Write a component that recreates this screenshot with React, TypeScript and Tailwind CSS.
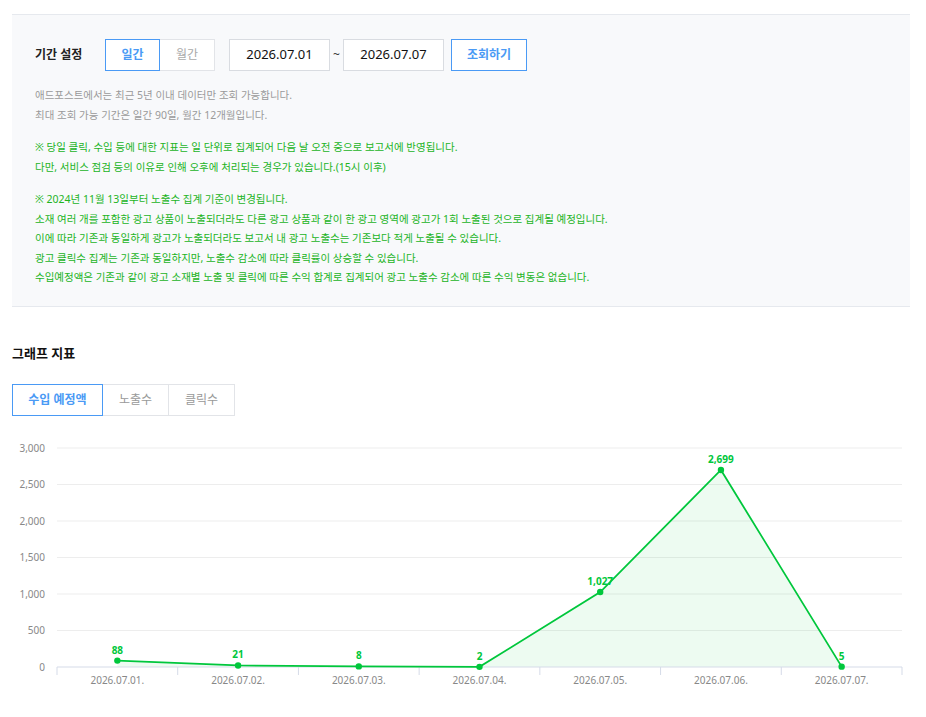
import React from "react";

const data = [
  { d: "2026.07.01.", v: 88 },
  { d: "2026.07.02.", v: 21 },
  { d: "2026.07.03.", v: 8 },
  { d: "2026.07.04.", v: 2 },
  { d: "2026.07.05.", v: 1027 },
  { d: "2026.07.06.", v: 2699 },
  { d: "2026.07.07.", v: 5 },
];

const GREEN = "#00c73c";
const left = 57;
const right = 902;
const top = 17;
const base = 236;
const step = (right - left) / 7;

const yOf = (v: number) => base - (v / 3000) * (base - top);
const xOf = (i: number) => left + step * i + step / 2;

const Chart = () => {
  const pts = data.map((p, i) => `${xOf(i)},${yOf(p.v)}`).join(" ");
  const area = `${xOf(0)},${base} ${pts} ${xOf(6)},${base}`;
  return (
    <svg width={926} height={270} className="block">
      {[3000, 2500, 2000, 1500, 1000, 500].map((t) => (
        <line key={t} x1={left} x2={right} y1={yOf(t)} y2={yOf(t)} stroke="#ededed" strokeWidth={1} />
      ))}
      {[3000, 2500, 2000, 1500, 1000, 500, 0].map((t) => (
        <text key={t} x={45} y={yOf(t) + 3.5} textAnchor="end" fontSize={10} fill="#888">
          {t.toLocaleString()}
        </text>
      ))}
      <polygon points={area} fill={GREEN} fillOpacity={0.07} />
      <line x1={left} x2={right} y1={base} y2={base} stroke="#d5dbe8" strokeWidth={1} />
      {Array.from({ length: 8 }).map((_, i) => (
        <line key={i} x1={left + step * i} x2={left + step * i} y1={base} y2={base + 8} stroke="#d5dbe8" strokeWidth={1} />
      ))}
      <polyline points={pts} fill="none" stroke={GREEN} strokeWidth={1.8} />
      {data.map((p, i) => (
        <g key={p.d}>
          <circle cx={xOf(i)} cy={yOf(p.v)} r={3.2} fill={GREEN} />
          <text x={xOf(i)} y={yOf(p.v) - 7} textAnchor="middle" fontSize={10} fontWeight={700} fill={GREEN}>
            {p.v.toLocaleString()}
          </text>
          <text x={xOf(i)} y={base + 17} textAnchor="middle" fontSize={10} fill="#888">
            {p.d}
          </text>
        </g>
      ))}
    </svg>
  );
};

const App = () => {
  return (
    <div
      className="w-[926px] h-[717px] bg-white overflow-hidden"
      style={{ fontFamily: '"Noto Sans", "Noto Sans CJK KR", sans-serif' }}
    >
      <section className="ml-3 w-[898px] mt-[14px] bg-[#f8f9fb] border-t border-b border-[#e6e9ee] pl-[23px] pt-[24px] pb-[18px]">
        <div className="flex items-center h-[32px]">
          <span className="w-[70px] text-[12px] font-bold text-[#222]">기간 설정</span>
          <div className="flex h-[32px]">
            <button className="w-[55px] h-full border border-[#4a9af5] bg-white text-[12px] text-[#4a9af5] font-bold">일간</button>
            <button className="w-[55px] h-full border border-l-0 border-[#e2e4e8] bg-white text-[12px] text-[#aaa]">월간</button>
          </div>
          <div className="ml-[14px] w-[101px] h-[32px] border border-[#d9dce1] bg-white flex items-center justify-center text-[13px] text-[#111]">2026.07.01</div>
          <span className="w-[13px] text-center text-[12px] text-[#333]">~</span>
          <div className="w-[101px] h-[32px] border border-[#d9dce1] bg-white flex items-center justify-center text-[13px] text-[#111]">2026.07.07</div>
          <button className="ml-[7px] w-[76px] h-[32px] border border-[#4a9af5] bg-white text-[12px] text-[#4a9af5] font-bold">조회하기</button>
        </div>
        <div className="mt-[14px] text-[10.5px] leading-[20px] text-[#9a9a9a]">
          <p>애드포스트에서는 최근 5년 이내 데이터만 조회 가능합니다.</p>
          <p>최대 조회 가능 기간은 일간 90일, 월간 12개월입니다.</p>
        </div>
        <div className="mt-[13px] text-[10.5px] leading-[19.5px] text-[#22b41e]">
          <p>※ 당일 클릭, 수입 등에 대한 지표는 일 단위로 집계되어 다음 날 오전 중으로 보고서에 반영됩니다.</p>
          <p>다만, 서비스 점검 등의 이유로 인해 오후에 처리되는 경우가 있습니다.(15시 이후)</p>
        </div>
        <div className="mt-[13px] text-[10.5px] leading-[19.6px] text-[#22b41e]">
          <p>※ 2024년 11월 13일부터 노출수 집계 기준이 변경됩니다.</p>
          <p>소재 여러 개를 포함한 광고 상품이 노출되더라도 다른 광고 상품과 같이 한 광고 영역에 광고가 1회 노출된 것으로 집계될 예정입니다.</p>
          <p>이에 따라 기존과 동일하게 광고가 노출되더라도 보고서 내 광고 노출수는 기존보다 적게 노출될 수 있습니다.</p>
          <p>광고 클릭수 집계는 기존과 동일하지만, 노출수 감소에 따라 클릭률이 상승할 수 있습니다.</p>
          <p>수입예정액은 기존과 같이 광고 소재별 노출 및 클릭에 따른 수익 합계로 집계되어 광고 노출수 감소에 따른 수익 변동은 없습니다.</p>
        </div>
      </section>

      <h2 className="mt-[36px] ml-3 text-[13px] font-bold text-[#111] leading-[20px]">그래프 지표</h2>
      <div className="mt-[21px] ml-3 flex h-[32px]">
        <button className="w-[91px] h-full border border-[#4a9af5] bg-white text-[12px] text-[#4a9af5] font-bold">수입 예정액</button>
        <button className="w-[66px] h-full border border-l-0 border-[#e2e4e8] bg-white text-[12px] text-[#999]">노출수</button>
        <button className="w-[66px] h-full border border-l-0 border-[#e2e4e8] bg-white text-[12px] text-[#999]">클릭수</button>
      </div>
      <div className="mt-[15px]">
        <Chart />
      </div>
    </div>
  );
};

export default App;
